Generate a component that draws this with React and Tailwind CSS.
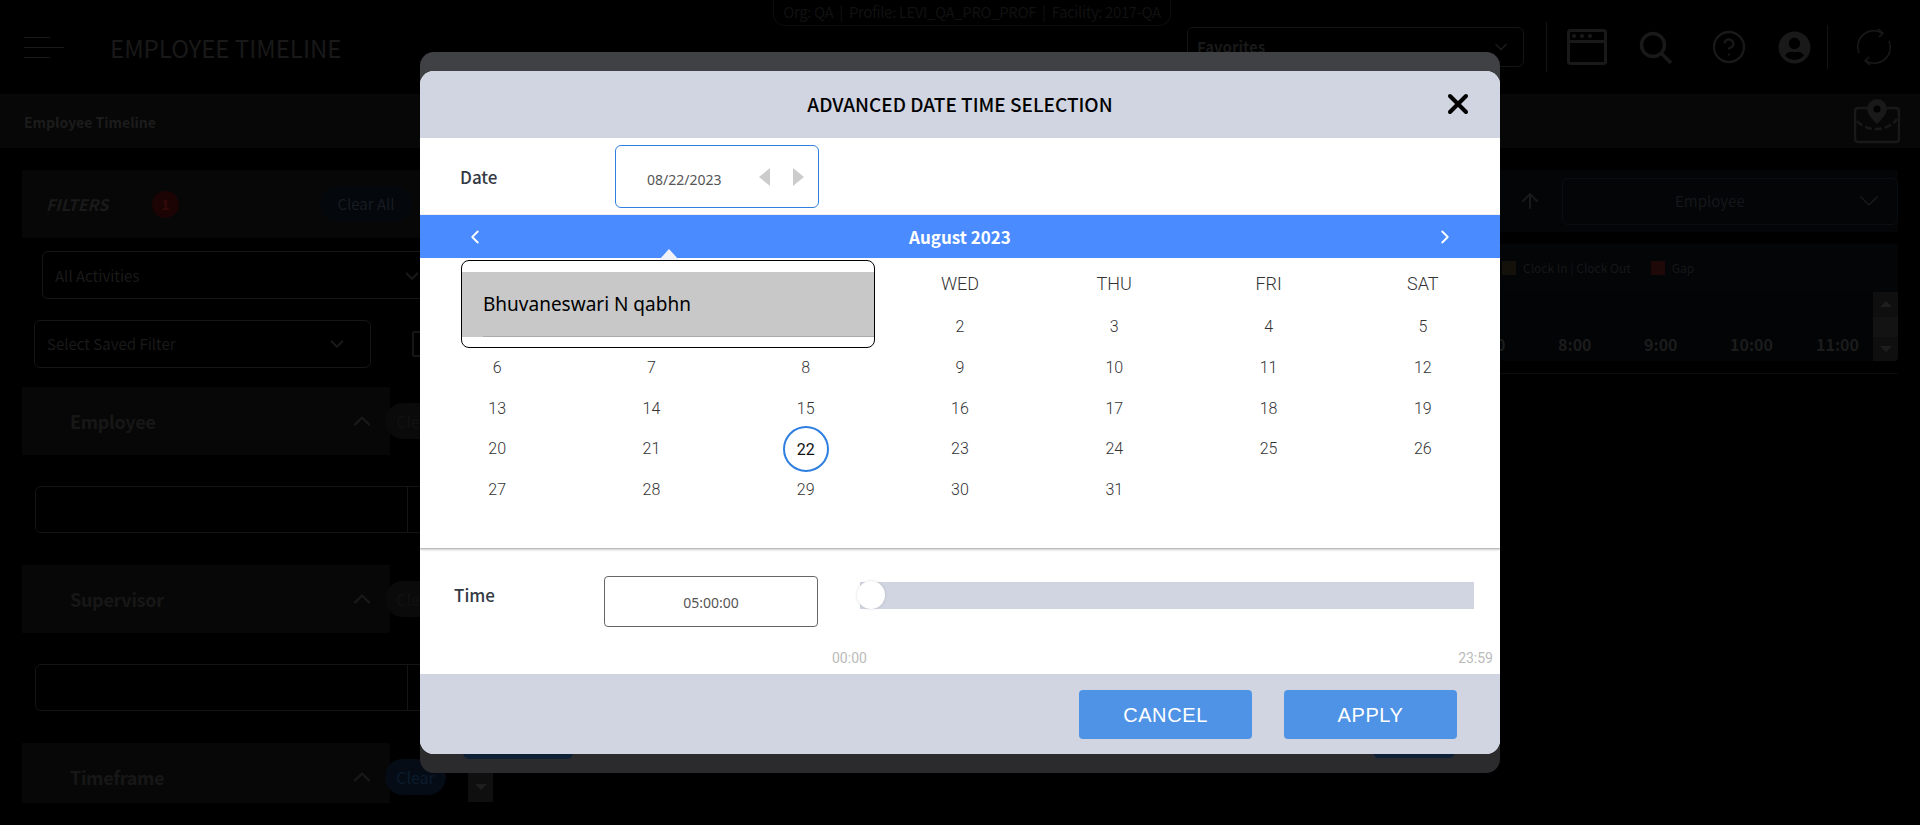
import { ChevronDown, ChevronUp, ChevronLeft, ChevronRight, ArrowUp, CircleHelp, X } from 'lucide-react';
import { FaUserCircle } from 'react-icons/fa';

const DIM = '#191919';
const DAYS = ['SUN', 'MON', 'TUE', 'WED', 'THU', 'FRI', 'SAT'];
const WEEKS = [
  ['', '', 1, 2, 3, 4, 5],
  [6, 7, 8, 9, 10, 11, 12],
  [13, 14, 15, 16, 17, 18, 19],
  [20, 21, 22, 23, 24, 25, 26],
  [27, 28, 29, 30, 31, '', ''],
];

function WindowIcon() {
  return (
    <svg width="40" height="36" viewBox="0 0 40 36" fill="none" stroke={DIM} strokeWidth="3">
      <rect x="1.5" y="1.5" width="37" height="33" rx="2" />
      <path d="M1.5 12.5h37" />
      <circle cx="7" cy="7" r="2" fill={DIM} stroke="none" />
      <circle cx="15" cy="7" r="2" fill={DIM} stroke="none" />
      <circle cx="23" cy="7" r="2" fill={DIM} stroke="none" />
    </svg>
  );
}

function SearchIcon() {
  return (
    <svg width="34" height="33" viewBox="0 0 34 33" fill="none" stroke={DIM} strokeWidth="3.5">
      <circle cx="14" cy="14" r="11.5" />
      <path d="M22 22l10 10" />
    </svg>
  );
}

function RefreshIcon() {
  return (
    <svg width="36" height="38" viewBox="0 0 36 38" fill="none" stroke={DIM} strokeWidth="1.5">
      <path d="M3 25A16 16 0 0 1 26 5" />
      <path d="M33 13A16 16 0 0 1 10 33" />
      <path d="M22 1l5 4-4 4" />
      <path d="M14 37l-5-4 4-4" />
    </svg>
  );
}

function MapIcon() {
  return (
    <svg width="46" height="46" viewBox="0 0 46 46" fill="none" stroke={DIM} strokeWidth="2.5">
      <path d="M13 10H4a3 3 0 0 0-3 3v28a3 3 0 0 0 3 3h38a3 3 0 0 0 3-3V13a3 3 0 0 0-3-3h-9" />
      <path d="M3 23c8 10 30 12 40-2" strokeDasharray="7 3" />
      <path fillRule="evenodd" d="M23 1a10 10 0 0 0-10 10c0 6 10 15 10 15s10-9 10-15A10 10 0 0 0 23 1z" fill={DIM} stroke="none" />
      <circle cx="23" cy="11" r="3.5" fill="#000" stroke="none" />
    </svg>
  );
}

function AccordionRow({ label, pillClass, textClass }) {
  return (
    <div className="flex items-center">
      <div className="flex h-[68px] w-[368px] items-center justify-between bg-[#070707] pl-[48px] pr-[14px] text-[18px] font-bold text-[#171717]">
        <span className="tracking-[-0.3px]">{label}</span>
        <ChevronUp size={28} color={DIM} />
      </div>
      <div className={`-ml-[5px] flex h-[36px] w-[61px] items-center justify-center rounded-full text-[16px] ${pillClass} ${textClass}`}>Clear</div>
    </div>
  );
}

function SearchInput() {
  return (
    <div className="mt-[31px] mb-[32px] ml-[13px] flex h-[47px] w-[440px] rounded-[6px] border border-[#141414]">
      <div className="w-[372px] border-r border-[#141414]" />
    </div>
  );
}

function Background() {
  return (
    <div className="flex h-full flex-col">
      <header className="flex h-[94px] shrink-0 items-start">
        <div className="mt-[37px] ml-[24px] flex w-[86px] flex-col gap-[9px]">
          <div className="h-px w-[26px] bg-[#191919]" />
          <div className="h-px w-[40px] bg-[#191919]" />
          <div className="h-px w-[26px] bg-[#191919]" />
        </div>
        <div className="mt-[30px] w-[663px] text-[24px] leading-[36px] text-[#191919]">EMPLOYEE TIMELINE</div>
        <div className="flex h-[26px] w-[398px] items-center justify-center gap-[6px] whitespace-nowrap rounded-b-[12px] border border-t-0 border-[#0c0c0c] text-[15px] tracking-[-0.4px] text-[#111111]">
          <span>Org: QA</span><span>|</span><span>Profile: LEVI_QA_PRO_PROF</span><span>|</span><span>Facility: 2017-QA</span>
        </div>
        <div className="mt-[27px] ml-[16px] flex h-[40px] w-[337px] items-center justify-between rounded-[6px] border border-[#141414] pl-[9px] pr-[12px] text-[15px] font-bold text-[#191919]">
          Favorites
          <ChevronDown size={20} color={DIM} />
        </div>
        <div className="mt-[22px] ml-[22px] h-[50px] w-px bg-[#141414]" />
        <div className="mt-[29px] ml-[20px]"><WindowIcon /></div>
        <div className="mt-[31px] ml-[32px]"><SearchIcon /></div>
        <div className="mt-[29px] ml-[38px]"><CircleHelp size={36} color={DIM} strokeWidth={1.5} /></div>
        <div className="mt-[31px] ml-[31px]"><FaUserCircle size={33} color={DIM} /></div>
        <div className="mt-[25px] ml-[16px] h-[44px] w-px bg-[#141414]" />
        <div className="mt-[28px] ml-[28px]"><RefreshIcon /></div>
      </header>

      <div className="flex h-[54px] shrink-0 items-center justify-between bg-[#070707] pl-[24px] pr-[20px] text-[14px] font-bold text-[#1c1c1c]">
        <span className="pt-[2px]">Employee Timeline</span>
        <MapIcon />
      </div>

      <main className="flex flex-1 justify-between overflow-hidden pt-[22px] pl-[22px] pr-[22px]">
        <div className="h-[633px] w-[480px] overflow-hidden">
          <div className="flex h-[68px] w-[400px] items-center bg-[#070707] pl-[24px]">
            <span className="w-[106px] text-[16px] font-bold italic text-[#1a1a1a]">FILTERS</span>
            <span className="flex h-[27px] w-[27px] items-center justify-center rounded-full bg-[#1c0404] text-[14px] font-bold text-[#330a0a]">1</span>
            <span className="ml-[141px] flex h-[36px] w-[92px] items-center justify-center rounded-full bg-[#04070b] text-[15px] text-[#171c22]">Clear All</span>
          </div>
          <div className="mt-[13px] ml-[20px] flex h-[48px] w-[400px] items-center justify-between rounded-[6px] border border-[#161616] pl-[12px] pr-[18px] pt-[2px] text-[15px] text-[#1a1a1a]">
            All Activities
            <ChevronDown size={22} color={DIM} />
          </div>
          <div className="mt-[21px] flex items-center">
            <div className="ml-[12px] flex h-[48px] w-[337px] items-center justify-between rounded-[6px] border border-[#161616] pl-[12px] pr-[22px] text-[15px] text-[#1a1a1a]">
              Select Saved Filter
              <ChevronDown size={22} color={DIM} />
            </div>
            <div className="ml-[41px] h-[26px] w-[16px] rounded-[2px] border-2 border-[#161616]" />
          </div>
          <div className="mt-[19px]"><AccordionRow label="Employee" pillClass="bg-[#0a0a0a]" textClass="text-[#111111]" /></div>
          <SearchInput />
          <AccordionRow label="Supervisor" pillClass="bg-[#0a0a0a]" textClass="text-[#111111]" />
          <SearchInput />
          <div className="flex items-start">
            <AccordionRow label="Timeframe" pillClass="bg-[#050c16]" textClass="text-[#0c1c2e]" />
            <div className="mt-[29px] ml-[22px] flex h-[30px] w-[25px] items-center justify-center bg-[#0f0f0f]">
              <div className="h-0 w-0 border-x-[6px] border-t-[6px] border-x-transparent border-t-[#1e1e1e]" />
            </div>
          </div>
        </div>

        <div className="w-[398px]">
          <div className="flex h-[62px] items-center bg-[#030507]">
            <div className="flex w-[60px] justify-center"><ArrowUp size={24} color={DIM} /></div>
            <div className="ml-[2px] flex h-[47px] flex-1 items-center justify-between rounded-[6px] border border-[#0b0e11] pl-[112px] pr-[12px] text-[15px] text-[#14171a]">
              Employee
              <ChevronDown size={32} color={DIM} strokeWidth={1.3} />
            </div>
          </div>
          <div className="mt-[12px] flex h-[48px] items-center gap-[7px] bg-[#030507] pl-[2px] text-[12px] text-[#171717]">
            <span className="h-[14px] w-[14px] bg-[#14100a]" />
            <span className="mr-[13px]">Clock In | Clock Out</span>
            <span className="h-[14px] w-[14px] bg-[#1e0808]" />
            <span>Gap</span>
          </div>
          <div className="flex h-[69px] bg-[#020406]">
            <div className="flex min-w-0 flex-1 items-end pb-[5px] text-[16px] font-bold text-[#1c1c1c]">
              <div className="-ml-[28px] flex shrink-0">
                {['7:00', '8:00', '9:00', '10:00', '11:00'].map((hour) => <span key={hour} className="w-[86px]">{hour}</span>)}
              </div>
            </div>
            <div className="relative flex w-[25px] shrink-0 flex-col items-center justify-between rounded-br-[4px] bg-[#0f0f0f] py-[9px]">
              <div className="h-0 w-0 border-x-[6px] border-b-[6px] border-x-transparent border-b-[#1e1e1e]" />
              <div className="h-[20px] w-full bg-[#131313]" />
              <div className="h-0 w-0 border-x-[6px] border-t-[6px] border-x-transparent border-t-[#1e1e1e]" />
            </div>
          </div>
          <div className="mt-[12px] h-px bg-[#0c0c0c]" />
        </div>
      </main>
    </div>
  );
}

function Calendar() {
  return (
    <div className="h-[291px] border-b border-[#bbbbbb] pt-[11px] font-['Roboto',sans-serif] font-light text-[#333333] shadow-[0_1px_2px_rgba(0,0,0,0.2)]">
      <div className="grid h-[28px] grid-cols-7 items-center text-center text-[18px]">
        {DAYS.map((day) => <div key={day}>{day}</div>)}
      </div>
      <div className="mt-[10px]">
        {WEEKS.map((week, i) => (
          <div key={i} className="grid h-[40.7px] grid-cols-7 items-center text-center text-[16px]">
            {week.map((day, j) => (
              <div key={j} className="flex justify-center">
                {day === 22 ? (
                  <span className="-my-[12px] flex h-[46px] w-[46px] items-center justify-center rounded-full border-2 border-[#2f7fe0] pt-[2px] font-normal text-[#111111]">22</span>
                ) : day}
              </div>
            ))}
          </div>
        ))}
      </div>
    </div>
  );
}

function Modal() {
  return (
    <div className="absolute top-[52px] left-[420px] h-[721px] w-[1080px] rounded-[14px] bg-gradient-to-b from-[#404145] to-[#2b2b2d] pt-[19px]">
      <div className="absolute bottom-[14px] left-[43px] h-[20px] w-[110px] rounded-b-[6px] bg-[#0e2036]" />
      <div className="absolute bottom-[15px] left-[953px] h-[20px] w-[82px] rounded-b-[6px] bg-[#0e2036]" />
      <div className="relative h-[683px] rounded-[14px] bg-white text-[#333333]">
        <div className="relative flex h-[67px] items-center justify-center rounded-t-[14px] bg-[#d0d5e1] text-[19px] font-medium text-black">
          ADVANCED DATE TIME SELECTION
          <X className="absolute right-[26px] top-[17px]" size={32} color="#000" strokeWidth={3} />
        </div>

        <div className="flex h-[77px] items-start border-b border-[#eeeeee] pl-[40px] pt-[7px]">
          <div className="mt-[19px] w-[155px] text-[17px] font-medium text-[#333a44]">Date</div>
          <div className="flex h-[63px] w-[204px] items-center rounded-[6px] border border-[#2f7fe0] pl-[31px] text-[14px] text-[#555555]">
            <span className="mt-[5px] font-['Noto_Sans',sans-serif]">08/22/2023</span>
            <span className="ml-[38px] h-0 w-0 border-y-[9px] border-r-[11px] border-y-transparent border-r-[#cccccc]" />
            <span className="ml-[23px] h-0 w-0 border-y-[9px] border-l-[11px] border-y-transparent border-l-[#cccccc]" />
          </div>
        </div>

        <div className="flex h-[43px] items-center justify-between bg-[#4a8cff] pl-[44px] pr-[44px] text-[17px] font-bold text-white">
          <ChevronLeft size={22} color="#fff" strokeWidth={2} />
          August 2023
          <ChevronRight size={22} color="#fff" strokeWidth={2} />
        </div>

        <Calendar />

        <div className="flex h-[125px]">
          <div className="w-[184px] pl-[34px] pt-[33px] text-[17px] font-medium text-[#333a44]">Time</div>
          <div className="mt-[27px] flex h-[51px] w-[214px] items-center justify-center rounded-[4px] border border-[#666666] pt-[2px] font-['Noto_Sans',sans-serif] text-[14px] text-[#555555]">05:00:00</div>
          <div className="ml-[14px] flex flex-1 flex-col pr-[7px]">
            <div className="relative mt-[33px] mr-[19px] ml-[28px] h-[27px] bg-[#d0d5e1]">
              <div className="absolute top-[-1px] -left-[3px] h-[28px] w-[28px] rounded-full bg-white shadow-[0_0_3px_rgba(0,0,0,0.15)]" />
            </div>
            <div className="mt-[39px] flex justify-between font-['Roboto',sans-serif] text-[14px] text-[#bbbbbb]">
              <span>00:00</span><span>23:59</span>
            </div>
          </div>
        </div>

        <div className="flex h-[80px] justify-end gap-[32px] rounded-b-[14px] bg-[#d0d5e1] pt-[16px] pr-[43px] font-['Liberation_Sans',sans-serif] text-[20px] tracking-[0.6px] text-white">
          <button className="h-[49px] w-[173px] rounded-[4px] bg-[#4f93e6]">CANCEL</button>
          <button className="h-[49px] w-[173px] rounded-[4px] bg-[#4f93e6]">APPLY</button>
        </div>

        {/* autocomplete popup sitting over the calendar */}
        <div className="absolute top-[189px] left-[41px] h-[88px] w-[414px] rounded-[8px] border border-black bg-white pt-[11px]">
          <div className="relative flex h-[65px] items-center bg-[#c8c8c8] pl-[21px] font-['Noto_Sans',sans-serif] text-[19px] text-black">
            Bhuvaneswari N qabhn
            <div className="absolute right-0 bottom-0 left-[21px] h-px bg-[#aaaaaa]" />
          </div>
          <div className="absolute -top-[12px] left-[197px] h-0 w-0 border-x-[10px] border-b-[11px] border-x-transparent border-b-[#f1f1f8]" />
        </div>
      </div>
    </div>
  );
}

export default function App() {
  return (
    <div className="relative h-[825px] w-[1920px] overflow-hidden bg-black font-['Noto_Sans_CJK_JP','Noto_Sans',sans-serif]">
      <Background />
      <Modal />
    </div>
  );
}
